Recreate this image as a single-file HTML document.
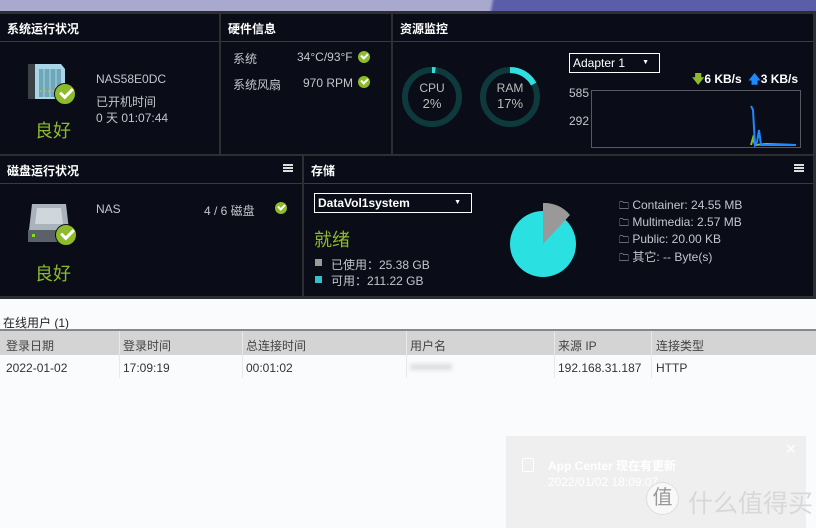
<!DOCTYPE html>
<html><head><meta charset="utf-8"><style>
*{margin:0;padding:0;box-sizing:border-box}
body{width:816px;height:528px;overflow:hidden;background:#fafbfd;font-family:"Liberation Sans","Noto Sans CJK SC",sans-serif;position:relative}
.top{position:absolute;left:0;top:0;width:816px;height:12px;background:linear-gradient(100deg,#a9a8cf 0,#a9a8cf 60%,#5a5ea8 60.5%,#5a5ea8 100%)}
.dark{position:absolute;left:0;top:11px;width:816px;height:288px;background:#2e2f33}
.p{position:absolute;background:#0a0c17;color:#ccc}
.h{height:28px;border-bottom:1px solid #3a3b40;color:#fff;font-weight:bold;font-size:12px;line-height:30px;padding-left:7px}
.t{position:absolute;font-size:12px;color:#c4c6cc}
.ok{position:absolute;width:12px;height:12px;border-radius:50%;background:#8dbb2a}
.ok:after{content:"";position:absolute;left:3px;top:2px;width:5px;height:3px;border-left:2px solid #fff;border-bottom:2px solid #fff;transform:rotate(-45deg)}
.big{position:absolute;width:22px;height:22px;border-radius:50%;background:#8dbb2a;border:1px solid #0a0c17}
.big:after{content:"";position:absolute;left:5px;top:4px;width:10px;height:5px;border-left:3px solid #fff;border-bottom:3px solid #fff;transform:rotate(-45deg)}
.g{position:absolute;color:#8dbb2a;font-size:18px}
.menu{position:absolute;width:10px;height:8px;border-top:2px solid #ddd;border-bottom:2px solid #ddd}
.menu:after{content:"";position:absolute;left:0;top:1px;width:10px;height:2px;background:#ddd}
.th{position:absolute;font-size:12px;color:#444;top:337px}
.td{position:absolute;font-size:12px;color:#333;top:361px}
</style></head><body>
<div class="top"></div>
<div class="dark"></div>
<div class="p" style="left:0;top:14px;width:219px;height:140px"><div class="h">系统运行状况</div></div>
<div class="p" style="left:221px;top:14px;width:170px;height:140px"><div class="h">硬件信息</div></div>
<div class="p" style="left:393px;top:14px;width:420px;height:140px"><div class="h">资源监控</div></div>
<div class="p" style="left:0;top:156px;width:302px;height:140px"><div class="h">磁盘运行状况</div></div>
<div class="p" style="left:304px;top:156px;width:509px;height:140px"><div class="h">存储</div></div>

<svg style="position:absolute;left:27px;top:61px" width="40" height="40"><polygon points="1,3 8,3 8,38 1,38" fill="#3c4147"/><polygon points="8,3 34,3 38,8 38,38 8,38" fill="#a8d6e6"/><rect x="12" y="8" width="22" height="28" fill="#6fa6b8"/><line x1="17" y1="8" x2="17" y2="36" stroke="#a8d6e6"/><line x1="23" y1="8" x2="23" y2="36" stroke="#a8d6e6"/><line x1="29" y1="8" x2="29" y2="36" stroke="#a8d6e6"/><line x1="13" y1="30" x2="34" y2="30" stroke="#e0c020" stroke-dasharray="2 2"/></svg>
<div class="big" style="left:54px;top:83px"></div>
<div class="g" style="left:35px;top:117px">良好</div>
<div class="t" style="left:96px;top:72px">NAS58E0DC</div>
<div class="t" style="left:96px;top:93px">已开机时间</div>
<div class="t" style="left:96px;top:109px">0 天 01:07:44</div>
<div class="t" style="left:233px;top:50px">系统</div>
<div class="t" style="left:297px;top:50px">34°C/93°F</div><div class="ok" style="left:358px;top:51px"></div>
<div class="t" style="left:233px;top:76px">系统风扇</div>
<div class="t" style="left:303px;top:76px">970 RPM</div><div class="ok" style="left:358px;top:76px"></div>
<svg style="position:absolute;left:401px;top:65px" width="160" height="64">
<circle cx="31" cy="32" r="27" fill="none" stroke="#0e3a3e" stroke-width="6"/>
<circle cx="31" cy="32" r="27" fill="none" stroke="#2ee0e0" stroke-width="6" stroke-dasharray="3.4 200" transform="rotate(-90 31 32)"/>
<circle cx="109" cy="32" r="27" fill="none" stroke="#0e3a3e" stroke-width="6"/>
<circle cx="109" cy="32" r="27" fill="none" stroke="#2ee0e0" stroke-width="6" stroke-dasharray="28.8 200" transform="rotate(-90 109 32)"/>
<text x="31" y="27" fill="#bbb" font-size="12" text-anchor="middle" font-family="Liberation Sans">CPU</text>
<text x="31" y="43" fill="#bbb" font-size="13" text-anchor="middle" font-family="Liberation Sans">2%</text>
<text x="109" y="27" fill="#bbb" font-size="12" text-anchor="middle" font-family="Liberation Sans">RAM</text>
<text x="109" y="43" fill="#bbb" font-size="13" text-anchor="middle" font-family="Liberation Sans">17%</text>
</svg>
<div style="position:absolute;left:569px;top:53px;width:91px;height:20px;border:1px solid #fff;color:#fff;font-size:12px;line-height:18px;padding-left:3px">Adapter 1<span style="position:absolute;right:10px;top:0;font-size:7px">▼</span></div>
<div class="t" style="left:692px;top:70px;color:#fff;font-weight:bold"><span style="color:#8dbb2a">🡇</span>6 KB/s &nbsp;<span style="color:#1e88ff">🡅</span>3 KB/s</div>
<div class="t" style="left:569px;top:86px">585</div>
<div class="t" style="left:569px;top:114px">292</div>
<svg style="position:absolute;left:591px;top:90px" width="210" height="58"><rect x="0.5" y="0.5" width="209" height="57" fill="none" stroke="#555a60"/><polyline points="160,55 162,48 164,55 175,54 205,55" fill="none" stroke="#8dbb2a" stroke-width="2"/><polyline points="160,16 162,20 164,55 166,52 168,40 170,55 205,55" fill="none" stroke="#1e88ff" stroke-width="2"/></svg>
<div class="menu" style="left:283px;top:164px"></div>
<svg style="position:absolute;left:27px;top:204px" width="42" height="38"><polygon points="5,0 39,0 42,26 2,26" fill="#aab3bb"/><polygon points="10,4 34,4 36,20 8,20" fill="#cfd6dc"/><rect x="1" y="26" width="41" height="12" fill="#5b6168"/><rect x="5" y="30" width="3" height="3" fill="#7ee020"/></svg>
<div class="big" style="left:55px;top:224px"></div>
<div class="g" style="left:35px;top:260px">良好</div>
<div class="t" style="left:96px;top:202px">NAS</div>
<div class="t" style="left:204px;top:202px">4 / 6 磁盘</div><div class="ok" style="left:275px;top:202px"></div>
<div class="menu" style="left:794px;top:164px"></div>
<div style="position:absolute;left:314px;top:193px;width:158px;height:20px;border:1px solid #fff;color:#fff;font-size:12px;font-weight:bold;line-height:18px;padding-left:3px">DataVol1system<span style="position:absolute;right:10px;top:0;font-size:7px">▼</span></div>
<div class="g" style="left:314px;top:226px">就绪</div>
<div style="position:absolute;left:315px;top:259px;width:7px;height:7px;background:#9a9a9a"></div>
<div class="t" style="left:331px;top:256px">已使用：25.38 GB</div>
<div style="position:absolute;left:315px;top:276px;width:7px;height:7px;background:#33c0c8"></div>
<div class="t" style="left:331px;top:272px">可用：211.22 GB</div>
<svg style="position:absolute;left:505px;top:198px" width="80" height="85"><circle cx="38" cy="46" r="33" fill="#2ae0e0"/><path d="M38 46 L38 5 A33 33 0 0 1 65 17 Z" fill="#999"/></svg>
<div class="t" style="left:619px;top:198px"><span style="font-size:10px">🗀</span> Container: 24.55 MB</div>
<div class="t" style="left:619px;top:215px"><span style="font-size:10px">🗀</span> Multimedia: 2.57 MB</div>
<div class="t" style="left:619px;top:232px"><span style="font-size:10px">🗀</span> Public: 20.00 KB</div>
<div class="t" style="left:619px;top:248px"><span style="font-size:10px">🗀</span> 其它: -- Byte(s)</div>
<div style="position:absolute;left:3px;top:314px;font-size:12px;color:#222">在线用户 (1)</div>
<div style="position:absolute;left:0;top:329px;width:816px;height:2px;background:#888"></div>
<div style="position:absolute;left:0;top:331px;width:816px;height:24px;background:#d4d4d4"></div>
<div style="position:absolute;left:119px;top:331px;width:1px;height:47px;background:#e8e8e8"></div>
<div style="position:absolute;left:242px;top:331px;width:1px;height:47px;background:#e8e8e8"></div>
<div style="position:absolute;left:406px;top:331px;width:1px;height:47px;background:#e8e8e8"></div>
<div style="position:absolute;left:554px;top:331px;width:1px;height:47px;background:#e8e8e8"></div>
<div style="position:absolute;left:651px;top:331px;width:1px;height:47px;background:#e8e8e8"></div>
<div class="th" style="left:6px">登录日期</div><div class="th" style="left:123px">登录时间</div><div class="th" style="left:246px">总连接时间</div><div class="th" style="left:410px">用户名</div><div class="th" style="left:558px">来源 IP</div><div class="th" style="left:656px">连接类型</div>
<div class="td" style="left:6px">2022-01-02</div><div class="td" style="left:123px">17:09:19</div><div class="td" style="left:246px">00:01:02</div>
<div style="position:absolute;left:410px;top:364px;width:42px;height:6px;background:#ddd;filter:blur(2px)"></div>
<div class="td" style="left:558px">192.168.31.187</div><div class="td" style="left:656px">HTTP</div>
<div style="position:absolute;left:506px;top:436px;width:300px;height:92px;background:#efefef"></div>
<div style="position:absolute;left:522px;top:458px;width:12px;height:14px;border:1px solid #fff;border-radius:2px"></div>
<div style="position:absolute;left:548px;top:457px;font-size:12px;font-weight:bold;color:#fff">App Center 现在有更新</div>
<div style="position:absolute;left:548px;top:475px;font-size:12px;color:#fff">2022/01/02 18:09:07</div>
<div style="position:absolute;left:785px;top:441px;font-size:14px;color:#fff">✕</div>
<div style="position:absolute;left:646px;top:482px;width:33px;height:33px;border-radius:50%;background:#f8f8f8;border:1px solid #ddd;color:#999;font-size:20px;text-align:center;line-height:31px">值</div>
<div style="position:absolute;left:688px;top:484px;font-size:25px;color:#d8d8d8;font-family:'Noto Sans CJK SC',sans-serif">什么值得买</div>
</body></html>
